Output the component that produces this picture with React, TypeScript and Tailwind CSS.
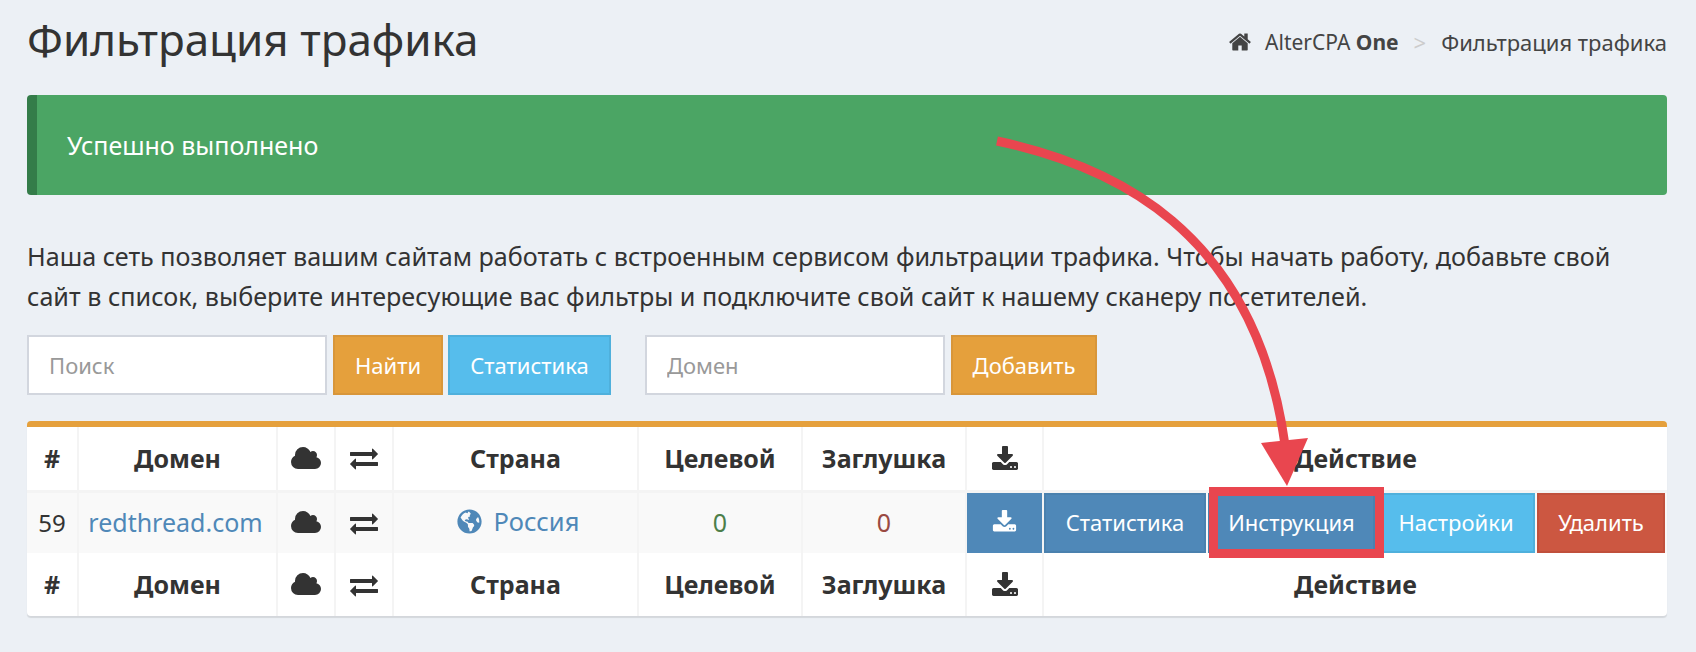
import React from "react";
import { FaGlobeAmericas } from "react-icons/fa";

const CLOUD = "M1920 1152q0 159-112.5 271.5t-271.5 112.5h-1088q-185 0-316.5-131.5t-131.5-316.5q0-132 71-241.5t187-163.5q-2-28-2-43 0-212 150-362t362-150q158 0 286.5 88t187.5 230q70-62 166-62 106 0 181 75t75 181q0 75-41 138 129 30 213 134.5t84 239.5z";
const EXCHANGE = "M1792 1184v192q0 13-9.5 22.5t-22.5 9.5h-1376v192q0 13-9.5 22.5t-22.5 9.5q-12 0-24-10l-319-320q-9-9-9-22 0-14 9-23l320-320q9-9 23-9 13 0 22.5 9.5t9.5 22.5v192h1376q13 0 22.5 9.5t9.5 22.5zm0-544q0 14-9 23l-320 320q-9 9-23 9-13 0-22.5-9.5t-9.5-22.5v-192h-1376q-13 0-22.5-9.5t-9.5-22.5v-192q0-13 9.5-22.5t22.5-9.5h1376v-192q0-14 9-23t23-9q12 0 24 10l319 319q9 9 9 23z";
const DOWNLOAD = "M1344 1344q0-26-19-45t-45-19-45 19-19 45 19 45 45 19 45-19 19-45zm256 0q0-26-19-45t-45-19-45 19-19 45 19 45 45 19 45-19 19-45zm128-224v320q0 40-28 68t-68 28h-1472q-40 0-68-28t-28-68v-320q0-40 28-68t68-28h465l135 136q58 56 136 56t136-56l136-136h464q40 0 68 28t28 68zm-325-569q17 41-14 70l-448 448q-18 19-45 19t-45-19l-448-448q-31-29-14-70 17-39 59-39h256v-448q0-26 19-45t45-19h256q26 0 45 19t19 45v448h256q42 0 59 39z";
const HOME = "M1472 992v480q0 26-19 45t-45 19h-384v-384h-256v384h-384q-26 0-45-19t-19-45v-480q0-1 .5-3t.5-3l575-474 575 474q1 2 1 6zm223-69l-62 74q-8 9-21 11h-3q-13 0-21-7l-692-577-692 577q-12 8-24 7-13-2-21-11l-62-74q-8-10-7-23.5t11-21.5l719-599q32-26 76-26t76 26l244 204v-195q0-14 9-23t23-9h192q14 0 23 9t9 23v408l219 182q10 8 11 21.5t-7 23.5z";

function Glyph({ d, vb = "0 0 1792 1792", className }: { d: string; vb?: string; className: string }) {
  return (
    <svg viewBox={vb} className={className} fill="currentColor" aria-hidden="true">
      <path d={d} />
    </svg>
  );
}

const cell = "border-r-2 border-[#f4f4f4] last:border-r-0 p-0 text-center align-middle";

function HeadRow({ bottom }: { bottom?: boolean }) {
  return (
    <tr className={bottom ? "h-[63px]" : "h-[64px] border-b-[3px] border-[#f4f4f4]"}>
      <th className={cell}>#</th>
      <th className={cell}>Домен</th>
      <th className={cell}><Glyph d={CLOUD} vb="0 128 1920 1408" className="mx-auto -mt-[1px] h-[22px] w-[30px]" /></th>
      <th className={cell}><Glyph d={EXCHANGE} className="mx-auto h-[28px] w-[28px]" /></th>
      <th className={cell}>Страна</th>
      <th className={cell}>Целевой</th>
      <th className={cell}>Заглушка</th>
      <th className={cell}><Glyph d={DOWNLOAD} className="mx-auto mt-[3px] h-[28px] w-[28px]" /></th>
      <th className={cell}>Действие</th>
    </tr>
  );
}

function RowButton({ className, children }: { className: string; children: React.ReactNode }) {
  return (
    <button className={`flex h-[60px] items-center justify-center border-2 text-white ${className}`}>
      {children}
    </button>
  );
}

export default function App() {
  return (
    <div className="relative h-[652px] w-[1696px] overflow-hidden bg-[#ecf0f5] font-['Noto_Sans',sans-serif] text-[#333]">
      <div className="pl-[27px] pr-[29px]">
        <header className="flex h-[95px] items-start justify-between">
          <h1 className="mt-[10px] text-[44px] leading-[58px] font-normal text-[#333]">Фильтрация трафика</h1>
          <nav className="mt-[25px] flex items-center text-[22px] leading-[34px] text-[#444]">
            <Glyph d={HOME} className="mr-[13px] h-[24px] w-[24px]" />
            <span className="text-[21px]">AlterCPA <b className="font-bold">One</b></span>
            <span className="mx-[15px] text-[#ccc]">&gt;</span>
            <span>Фильтрация трафика</span>
          </nav>
        </header>

        <div className="flex h-[100px] items-center rounded-[4px] border-l-[10px] border-[#347c49] bg-[#4ba564] pt-[1px] pl-[30px] text-[25px] text-white">
          Успешно выполнено
        </div>

        <p className="mt-[41px] text-[25.15px] leading-[40px] whitespace-nowrap text-[#333]">
          Наша сеть позволяет вашим сайтам работать с встроенным сервисом фильтрации трафика. Чтобы начать работу, добавьте свой
          <br />
          сайт в список, выберите интересующие вас фильтры и подключите свой сайт к нашему сканеру посетителей.
        </p>

        <form className="mt-[19px] flex h-[60px] items-stretch text-[22px]">
          <input placeholder="Поиск" className="w-[300px] border-2 border-[#d2d6de] bg-white px-[20px] text-[22px] outline-none placeholder:text-[#999]" />
          <button type="button" className="ml-[6px] w-[110px] border-2 border-[#d8963a] bg-[#e5a03c] text-white">Найти</button>
          <button type="button" className="ml-[5px] w-[163px] border-2 border-[#4fb0dc] bg-[#56bdec] text-white">Статистика</button>
          <input placeholder="Домен" className="ml-[34px] w-[300px] border-2 border-[#d2d6de] bg-white px-[20px] text-[22px] outline-none placeholder:text-[#999]" />
          <button type="button" className="ml-[6px] w-[146px] border-2 border-[#d8963a] bg-[#e5a03c] text-white">Добавить</button>
        </form>

        <section className="mt-[26px] overflow-hidden rounded-[4px] border-t-[6px] border-[#e5a03c] bg-white shadow-[0_2px_1px_rgba(0,0,0,0.1)]">
          <table className="w-full table-fixed border-collapse text-[25px] font-bold text-[#333]">
            <colgroup>
              <col className="w-[51px]" />
              <col className="w-[199px]" />
              <col className="w-[58px]" />
              <col className="w-[58px]" />
              <col className="w-[245px]" />
              <col className="w-[164px]" />
              <col className="w-[164px]" />
              <col className="w-[77px]" />
              <col />
            </colgroup>
            <thead><HeadRow /></thead>
            <tbody>
              <tr className="h-[62px] bg-[#f9f9f9] font-normal">
                <td className={`${cell} text-[24px]`}>59</td>
                <td className={`${cell} pr-[4px] text-[#4f88b8]`}>redthread.com</td>
                <td className={cell}><Glyph d={CLOUD} vb="0 128 1920 1408" className="mx-auto -mt-[1px] h-[22px] w-[30px]" /></td>
                <td className={cell}><Glyph d={EXCHANGE} className="mx-auto h-[28px] w-[28px]" /></td>
                <td className={`${cell} pl-[5px] text-[25.5px] text-[#4f88b8]`}>
                  <span className="inline-flex items-center gap-[12px]"><FaGlobeAmericas className="mt-[2px] h-[25px] w-[25px]" />Россия</span>
                </td>
                <td className={`${cell} text-[#4d7f4a]`}>0</td>
                <td className={`${cell} text-[#9a4a42]`}>0</td>
                <td className={cell}>
                  <RowButton className="w-full border-[#4f88b8] bg-[#4f88b8]"><Glyph d={DOWNLOAD} className="h-[25px] w-[25px]" /></RowButton>
                </td>
                <td className={cell}>
                  <div className="flex gap-[2px] text-[22px]">
                    <RowButton className="w-[162px] border-[#4a81ae] bg-[#4f88b8]">Статистика</RowButton>
                    <RowButton className="w-[167px] border-[#4a81ae] bg-[#4f88b8]">Инструкция</RowButton>
                    <RowButton className="w-[158px] border-[#4fb0dc] bg-[#56bdec]">Настройки</RowButton>
                    <RowButton className="w-[128px] border-[#c0503c] bg-[#cc5741]">Удалить</RowButton>
                  </div>
                </td>
              </tr>
            </tbody>
            <tfoot><HeadRow bottom /></tfoot>
          </table>
        </section>
      </div>

      <svg viewBox="0 0 1696 652" className="pointer-events-none absolute inset-0 h-[652px] w-[1696px]" aria-hidden="true">
        <path d="M997 141 C1110 165 1255 228 1285 445" fill="none" stroke="#e9464f" strokeWidth="9" />
        <polygon points="1261,443 1308,438 1287,486" fill="#e9464f" />
        <rect x="1213.5" y="491.5" width="166" height="62" fill="none" stroke="#e9464f" strokeWidth="9" />
      </svg>
    </div>
  );
}
